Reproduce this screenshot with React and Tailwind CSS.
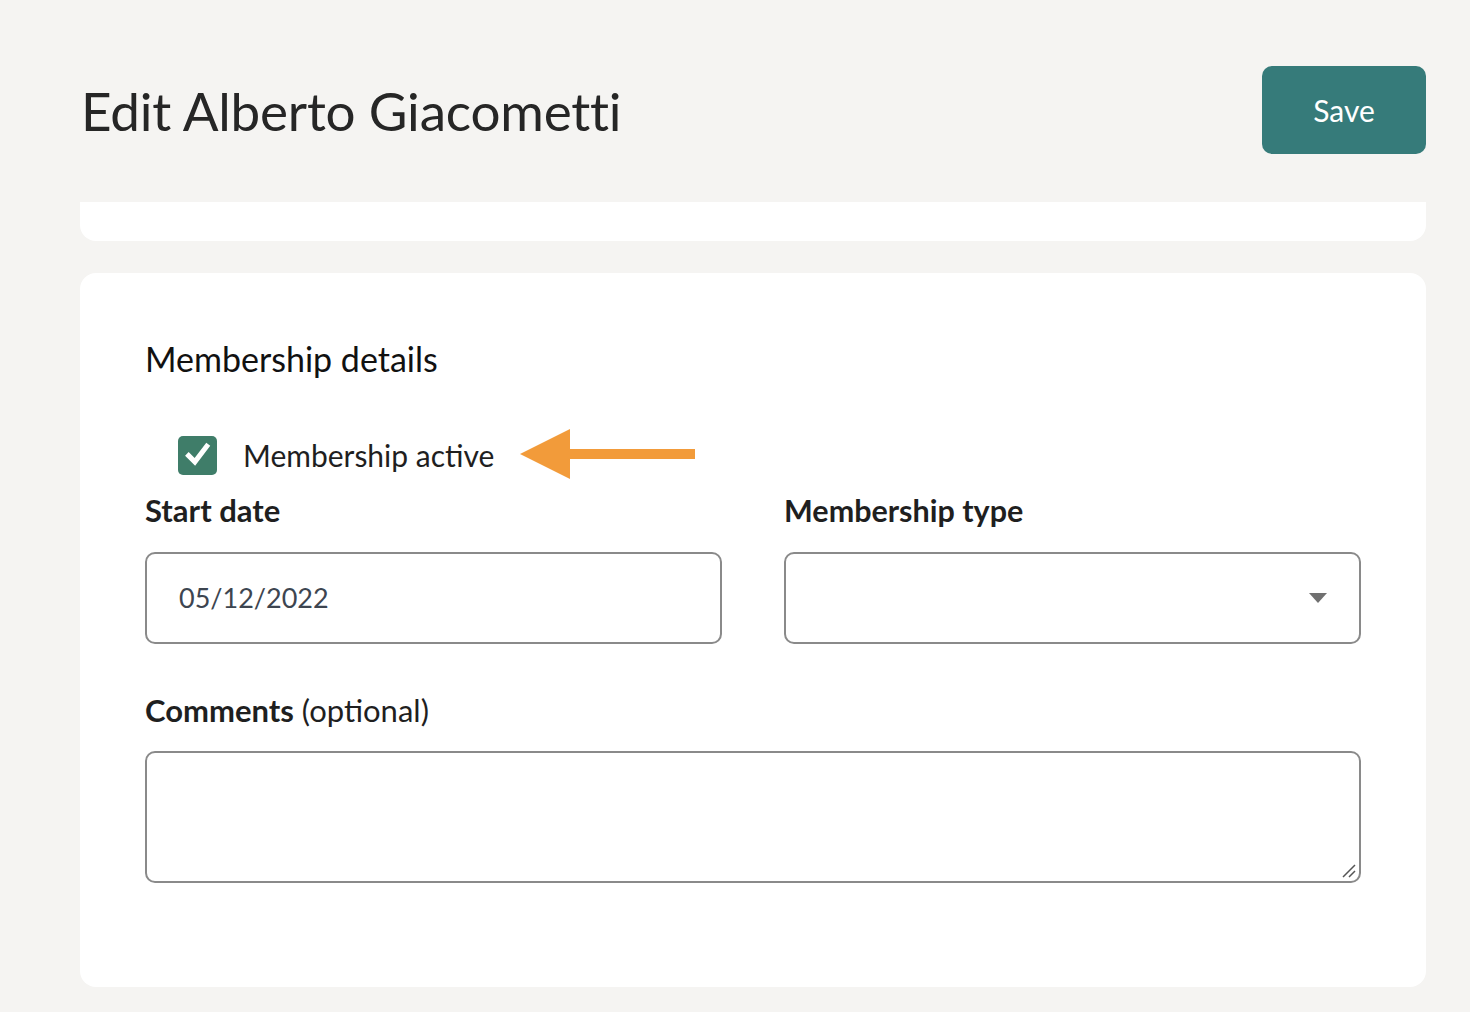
import React from "react";

function Arrow() {
  return (
    <svg width="176" height="52" viewBox="0 0 176 52" className="ml-[26px]">
      <polygon points="0,25 50,0 50,50" fill="#f29b3a" />
      <rect x="48" y="20" width="127" height="10" fill="#f29b3a" />
    </svg>
  );
}

export default function App() {
  return (
    <div className="min-h-screen bg-[#f5f4f2] text-[#1f1f1f] font-['Lato','Noto_Sans',sans-serif]">
      <div className="pl-[80px] pr-[44px] pt-[66px]">
        <div className="flex items-center justify-between h-[88px] pl-px">
          <h1 className="text-[53px] leading-none text-[#262626] tracking-[-0.2px]">Edit Alberto Giacometti</h1>
          <button
            type="button"
            className="w-[164px] h-[88px] rounded-[10px] bg-[#367b7a] text-white text-[30px]"
          >
            Save
          </button>
        </div>

        <div className="mt-[48px] h-[39px] bg-white rounded-b-[16px]" />

        <div className="mt-[32px] bg-white rounded-[16px] px-[65px] pt-[62px] pb-[104px]">
          <h2 className="text-[34px] leading-[48px] text-[#111]">Membership details</h2>

          <div className="mt-[46px] flex items-center h-[52px] pl-[33px]">
            <span className="w-[39px] h-[39px] rounded-[5px] bg-[#3f7d69] flex items-center justify-center">
              <svg width="30" height="30" viewBox="0 0 24 24" fill="none" stroke="white" strokeWidth="4" strokeLinecap="square">
                <path d="M4.5 12.5 L9.5 17.5 L19 5" />
              </svg>
            </span>
            <span className="ml-[26px] text-[30px] text-[#1f1f1f]">Membership active</span>
            <Arrow />
          </div>

          <div className="mt-[6px] grid grid-cols-2 gap-[62px]">
            <div>
              <label className="block text-[31px] font-bold leading-[46px] text-[#1f1f1f]">Start date</label>
              <div className="mt-[19px] h-[92px] rounded-[10px] border-2 border-[#8a8a8a] flex items-center px-[32px] text-[27px] text-[#3d4550]">
                05/12/2022
              </div>
            </div>
            <div>
              <label className="block text-[30.5px] font-bold leading-[46px] text-[#1f1f1f]">Membership type</label>
              <div className="mt-[19px] h-[92px] rounded-[10px] border-2 border-[#8a8a8a] flex items-center justify-end pr-[32px]">
                <svg width="18" height="10" viewBox="0 0 18 10">
                  <polygon points="0,0 18,0 9,10" fill="#707070" />
                </svg>
              </div>
            </div>
          </div>

          <div className="mt-[43px]">
            <label className="block text-[31px] leading-[46px] text-[#1f1f1f]">
              <span className="font-bold">Comments</span> (optional)
            </label>
            <div className="relative mt-[18px] h-[132px] rounded-[10px] border-2 border-[#8a8a8a]">
              <svg width="16" height="16" viewBox="0 0 16 16" className="absolute right-[2px] bottom-[2px]">
                <path d="M2 14 L14 2 M8 14 L14 8" stroke="#555" strokeWidth="1.5" />
              </svg>
            </div>
          </div>
        </div>
      </div>
    </div>
  );
}
